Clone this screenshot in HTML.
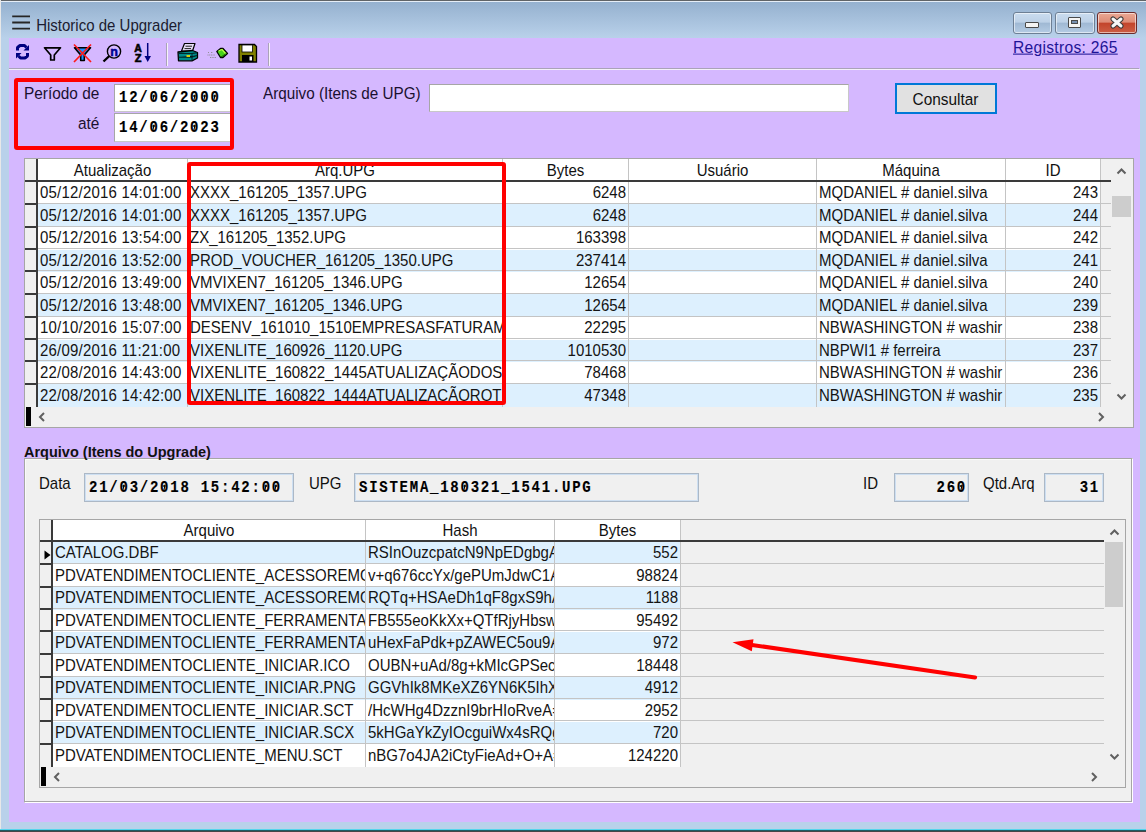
<!DOCTYPE html>
<html><head><meta charset="utf-8"><style>
html,body{margin:0;padding:0;width:1146px;height:832px;overflow:hidden;background:#b9d1ea}
body{position:relative;font-family:"Liberation Sans",sans-serif}
body div, body svg{position:absolute}
.t{white-space:nowrap;line-height:17px;font-size:15px;transform-origin:0 0}
.c{overflow:hidden}
.z{position:relative}.z::after{content:'';position:absolute;left:3.7px;top:5.5px;width:1.3px;height:5px;background:#000;transform:rotate(16deg)}
.m{-webkit-text-stroke:0.12px #000;white-space:nowrap;line-height:17px;font-family:"Liberation Mono",monospace;font-weight:bold;font-size:14px;letter-spacing:1.75px;color:#000;transform-origin:0 0}
</style></head><body>
<div style="left:0px;top:0px;width:1146px;height:832px;background:#b9d1ea"></div>
<div style="left:0px;top:0px;width:1146px;height:38px;background:linear-gradient(#95b1cf 5%,#b9d1ea 100%)"></div>
<div style="left:0px;top:0px;width:1146px;height:1px;background:#606467"></div>
<div style="left:0px;top:1px;width:1146px;height:1px;background:#e6eef7"></div>
<div style="left:0px;top:0px;width:1px;height:832px;background:#e8e8e8"></div>
<div style="left:0px;top:829px;width:1146px;height:1px;background:#55d4ec"></div>
<div style="left:0px;top:830px;width:1146px;height:1px;background:#1d5d66"></div>
<div style="left:0px;top:831px;width:1146px;height:1px;background:#474747"></div>
<div style="left:9px;top:38px;width:1131px;height:784px;background:#d5b8ff"></div>
<svg style="left:10px;top:12px" width="22" height="20" viewBox="10 12 22 20"><path d="M12.2 16.3 L30 16.3 M12.2 22.5 L30 22.5 M12.2 28.7 L30 28.7" stroke="#262626" stroke-width="1.8"/></svg>
<div class="t" style="left:36.2px;top:15.78px;font-size:15px;color:#1c1c30;transform:scaleY(1.06);">Historico de Upgrader</div>
<div style="left:1013px;top:12px;width:37px;height:20px;border:1px solid #6d7f94;border-radius:3px;background:linear-gradient(#cadcef 0%,#bdd1e7 45%,#a0b9d4 52%,#b5cce4 100%);box-shadow:inset 0 0 0 1px rgba(255,255,255,.55)"></div>
<div style="left:1055px;top:12px;width:38px;height:20px;border:1px solid #6d7f94;border-radius:3px;background:linear-gradient(#cadcef 0%,#bdd1e7 45%,#a0b9d4 52%,#b5cce4 100%);box-shadow:inset 0 0 0 1px rgba(255,255,255,.55)"></div>
<div style="left:1097px;top:12px;width:38px;height:20px;border:1px solid #6b2a2a;border-radius:3px;background:linear-gradient(#eaa894 0%,#de8c77 45%,#c3452c 52%,#cc5e45 100%);box-shadow:inset 0 0 0 1px rgba(255,255,255,.55)"></div>
<div style="left:1025px;top:22px;width:12px;height:4px;background:#f4f4f4;border:1px solid #4a4a4a;border-radius:1px"></div>
<div style="left:1068px;top:17px;width:11px;height:9px;border:1px solid #4a4a4a;border-radius:1px;background:#f4f4f4"></div>
<div style="left:1071px;top:20px;width:5px;height:2px;background:#7690b0;border:1px solid #4a4a4a"></div>
<svg style="left:1109px;top:16px" width="16" height="13" viewBox="0 0 16 13"><path d="M4 3 L12 10 M12 3 L4 10" stroke="#3a3a3a" stroke-width="5" stroke-linecap="round"/><path d="M4 3 L12 10 M12 3 L4 10" stroke="#f6f6f6" stroke-width="3" stroke-linecap="round"/></svg>
<div style="left:9px;top:68px;width:1130px;height:1px;background:#aaa3b8"></div>
<div style="left:9px;top:69px;width:1131px;height:1px;background:#f4f0fa"></div>
<div style="left:166px;top:43px;width:1px;height:23px;background:#aaa3b8"></div>
<div style="left:167px;top:43px;width:1px;height:23px;background:#f6f2fb"></div>
<div style="left:268px;top:43px;width:1px;height:23px;background:#aaa3b8"></div>
<div style="left:269px;top:43px;width:1px;height:23px;background:#f6f2fb"></div>

<svg style="left:0px;top:0px" width="300" height="68" viewBox="0 0 300 68">
 <g fill="#000080">
  <polyline points="17.5,50.5 17.5,47.5 20,45.5 24.5,45.5 26.5,47.5" fill="none" stroke="#000080" stroke-width="3" stroke-linejoin="bevel"/>
  <polygon points="23.5,50.5 29,50.5 29,45"/>
  <polyline points="27.5,53 27.5,56 25,58 20.5,58 18.5,56" fill="none" stroke="#000080" stroke-width="3" stroke-linejoin="bevel"/>
  <polygon points="21.5,53 16,53 16,58.5"/>
 </g>
 <path d="M44.5 47.8 L60.5 47.8 L54.3 55 L54.3 60 L50.7 60 L50.7 55 Z" fill="none" stroke="#000" stroke-width="1.7" stroke-linejoin="round"/>
 <path d="M74.5 47.8 L90.5 47.8 L84.3 55 L84.3 60.5 L80.7 60.5 L80.7 55 Z" fill="#1e90ff" stroke="#000" stroke-width="1.6" stroke-linejoin="round"/>
 <path d="M74 44.5 L91 62 M91 44.5 L74 62" stroke="#ff1a1a" stroke-width="1.7"/>
 <circle cx="114" cy="51.5" r="6.6" fill="none" stroke="#000" stroke-width="1.4"/>
 <path d="M109.3 56 L103.5 61.5" stroke="#000" stroke-width="2.4"/>
 <text x="114" y="55.6" text-anchor="middle" font-family="Liberation Sans" font-weight="bold" font-size="12.5" fill="#000090" stroke="#000090" stroke-width="0.5">n</text>
 <text x="138" y="51.5" text-anchor="middle" font-family="Liberation Sans" font-weight="bold" font-size="10.5" fill="#000" stroke="#000" stroke-width="0.6">A</text>
 <text x="138" y="61.8" text-anchor="middle" font-family="Liberation Sans" font-weight="bold" font-size="11" fill="#000" stroke="#000" stroke-width="0.6">Z</text>
 <path d="M147.7 43 L147.7 57" stroke="#000080" stroke-width="1.5"/>
 <path d="M144.5 56 L151 56 L147.7 62 Z" fill="#000080"/>
 <!-- printer -->
 <path d="M184.5 43.5 L195 43.5 L192.5 51 L181.5 51 Z" fill="#e6dcf5" stroke="#000" stroke-width="1.2" stroke-linejoin="round"/>
 <path d="M185.5 46.2 L192 46.2 M184.5 48.6 L191 48.6" stroke="#222" stroke-width="1"/>
 <path d="M178 52 L192.5 50.5 L197.5 52.5 L197.5 58 L192 60.8 L178.5 60.8 Z" fill="#008a8a" stroke="#000" stroke-width="1.3" stroke-linejoin="round"/>
 <path d="M178.5 53.5 L192 53.5 L197 52.8 M178.5 57.2 L192 57.2 L197 55.5 M192 53.5 L192 60.5" stroke="#002a2a" stroke-width="1"/>
 <path d="M186.5 56 L190 56" stroke="#f2e000" stroke-width="1.8"/>
 <!-- eraser -->
 <path d="M208 52.5 L209.5 52.5 M211 52.5 L213 52.5 M207.5 55 L215 55 M210 57.5 L216 57.5" stroke="#8a8a8a" stroke-width="0.9" stroke-dasharray="1 0.7"/>
 <path d="M216.8 51.5 L220.5 48.5 L223 48.5 L227.5 53.5 L223 57.5 L220.5 57.5 Z" fill="#46d21a" stroke="#000" stroke-width="1.3" stroke-linejoin="round"/>
 <path d="M218.5 51 L222 49.5 L226 54" fill="none" stroke="#b8ff40" stroke-width="1.2"/>
 <path d="M221 57 L227 53" stroke="#1a6a00" stroke-width="1"/>
 <!-- floppy -->
 <path d="M239 44.5 L254.5 44.5 L256.5 46.5 L256.5 62 L239 62 Z" fill="#808000" stroke="#000" stroke-width="1.3"/>
 <rect x="242" y="45" width="10.5" height="7" fill="#fff" stroke="#000" stroke-width="0.8"/>
 <rect x="242" y="55" width="11.5" height="7" fill="#000"/>
 <rect x="249.5" y="56.5" width="2.5" height="4" fill="#fff"/>
</svg>

<div class="t" style="left:1013px;top:38.11px;font-size:15.6px;color:#1e1496;transform:scaleY(1.04);text-decoration:underline;letter-spacing:0.3px;">Registros: 265</div>
<div class="t" style="left:24px;top:83.81px;font-size:15.4px;color:#1a1030;transform:scaleY(1.08);">Período de</div>
<div class="t" style="left:78px;top:113.81px;font-size:15.4px;color:#1a1030;transform:scaleY(1.08);">até</div>
<div style="left:114px;top:84px;width:118px;height:28px;background:#fff;border-top:1px solid #a6a6a6;border-left:1px solid #a6a6a6;border-right:1px solid #c8c8c8;border-bottom:1px solid #c8c8c8;box-sizing:border-box"></div>
<div style="left:114px;top:113px;width:118px;height:29px;background:#fff;border-top:1px solid #a6a6a6;border-left:1px solid #a6a6a6;border-right:1px solid #c8c8c8;border-bottom:1px solid #c8c8c8;box-sizing:border-box"></div>
<div class="m" style="left:119px;top:87.17px;transform:scaleY(1.24);">12/<span class="z">0</span>6/2<span class="z">0</span><span class="z">0</span><span class="z">0</span></div>
<div class="m" style="left:119px;top:117.07px;transform:scaleY(1.24);">14/<span class="z">0</span>6/2<span class="z">0</span>23</div>
<div style="left:14px;top:78px;width:212px;height:64px;border:4px solid #ff0000;border-radius:3px"></div>
<div class="t" style="left:263px;top:83.85px;font-size:15.25px;color:#1a1030;transform:scaleY(1.08);">Arquivo (Itens de UPG)</div>
<div style="left:429px;top:84px;width:420px;height:28px;background:#fff;border-top:1px solid #a6a6a6;border-left:1px solid #a6a6a6;border-right:1px solid #c8c8c8;border-bottom:1px solid #c8c8c8;box-sizing:border-box"></div>
<div style="left:895px;top:83px;width:98px;height:27px;border:2px solid #0078d7;background:#e1e1e1"></div>
<div class="t" style="left:894.5px;top:90.21px;font-size:15.4px;color:#111;transform:scaleY(1.08);width:102px;text-align:center;">Consultar</div>
<div style="left:24px;top:158px;width:1110px;height:270px;background:#f0f0f0;border:1px solid #a6a6a6;box-sizing:border-box"></div>
<div style="left:38px;top:159px;width:1062px;height:21px;background:#fff"></div>
<div style="left:38px;top:182px;width:1062px;height:22px;background:#fff"></div>
<div style="left:38px;top:204px;width:1062px;height:23px;background:#ddf0fe"></div>
<div style="left:38px;top:227px;width:1062px;height:23px;background:#fff"></div>
<div style="left:38px;top:250px;width:1062px;height:22px;background:#ddf0fe"></div>
<div style="left:38px;top:272px;width:1062px;height:22px;background:#fff"></div>
<div style="left:38px;top:294px;width:1062px;height:23px;background:#ddf0fe"></div>
<div style="left:38px;top:317px;width:1062px;height:23px;background:#fff"></div>
<div style="left:38px;top:340px;width:1062px;height:22px;background:#ddf0fe"></div>
<div style="left:38px;top:362px;width:1062px;height:22px;background:#fff"></div>
<div style="left:38px;top:384px;width:1062px;height:23px;background:#ddf0fe"></div>
<div style="left:38px;top:203px;width:1073px;height:1px;background:#c4c4c4"></div>
<div style="left:25px;top:203px;width:12px;height:2px;background:#3a3a3a"></div>
<div style="left:38px;top:226px;width:1073px;height:1px;background:#c4c4c4"></div>
<div style="left:25px;top:226px;width:12px;height:2px;background:#3a3a3a"></div>
<div style="left:38px;top:248px;width:1073px;height:1px;background:#c4c4c4"></div>
<div style="left:25px;top:248px;width:12px;height:2px;background:#3a3a3a"></div>
<div style="left:38px;top:270px;width:1073px;height:1px;background:#c4c4c4"></div>
<div style="left:25px;top:270px;width:12px;height:2px;background:#3a3a3a"></div>
<div style="left:38px;top:293px;width:1073px;height:1px;background:#c4c4c4"></div>
<div style="left:25px;top:293px;width:12px;height:2px;background:#3a3a3a"></div>
<div style="left:38px;top:316px;width:1073px;height:1px;background:#c4c4c4"></div>
<div style="left:25px;top:316px;width:12px;height:2px;background:#3a3a3a"></div>
<div style="left:38px;top:338px;width:1073px;height:1px;background:#c4c4c4"></div>
<div style="left:25px;top:338px;width:12px;height:2px;background:#3a3a3a"></div>
<div style="left:38px;top:360px;width:1073px;height:1px;background:#c4c4c4"></div>
<div style="left:25px;top:360px;width:12px;height:2px;background:#3a3a3a"></div>
<div style="left:38px;top:383px;width:1073px;height:1px;background:#c4c4c4"></div>
<div style="left:25px;top:383px;width:12px;height:2px;background:#3a3a3a"></div>
<div style="left:187px;top:159px;width:1px;height:248px;background:#c4c4c4"></div>
<div style="left:502px;top:159px;width:1px;height:248px;background:#c4c4c4"></div>
<div style="left:628px;top:159px;width:1px;height:248px;background:#c4c4c4"></div>
<div style="left:816px;top:159px;width:1px;height:248px;background:#c4c4c4"></div>
<div style="left:1005px;top:159px;width:1px;height:248px;background:#c4c4c4"></div>
<div style="left:1100px;top:159px;width:1px;height:248px;background:#c4c4c4"></div>
<div style="left:36px;top:159px;width:2px;height:248px;background:#3a3a3a"></div>
<div style="left:25px;top:180px;width:1086px;height:2px;background:#3a3a3a"></div>
<div class="t" style="left:38px;top:160.71px;font-size:15px;color:#111;transform:scaleY(1.08);width:149px;text-align:center;">Atualização</div>
<div class="t" style="left:188px;top:160.71px;font-size:15px;color:#111;transform:scaleY(1.08);width:314px;text-align:center;">Arq.UPG</div>
<div class="t" style="left:503px;top:160.71px;font-size:15px;color:#111;transform:scaleY(1.08);width:125px;text-align:center;">Bytes</div>
<div class="t" style="left:629px;top:160.71px;font-size:15px;color:#111;transform:scaleY(1.08);width:187px;text-align:center;">Usuário</div>
<div class="t" style="left:817px;top:160.71px;font-size:15px;color:#111;transform:scaleY(1.08);width:188px;text-align:center;">Máquina</div>
<div class="t" style="left:1006px;top:160.71px;font-size:15px;color:#111;transform:scaleY(1.08);width:94px;text-align:center;">ID</div>
<div class="t c" style="left:40px;top:183.41px;font-size:15px;color:#141414;transform:scaleY(1.08);width:147px;letter-spacing:0.2px;">05/12/2016 14:01:00</div>
<div class="t c" style="left:190px;top:183.41px;font-size:15px;color:#141414;transform:scaleY(1.08);width:312px;">XXXX_161205_1357.UPG</div>
<div class="t c" style="left:503px;top:183.41px;font-size:15px;color:#141414;transform:scaleY(1.08);width:123px;text-align:right;">6248</div>
<div class="t c" style="left:819px;top:183.41px;font-size:15px;color:#141414;transform:scaleY(1.08);width:186px;">MQDANIEL # daniel.silva</div>
<div class="t c" style="left:1006px;top:183.41px;font-size:15px;color:#141414;transform:scaleY(1.08);width:92px;text-align:right;">243</div>
<div class="t c" style="left:40px;top:205.91px;font-size:15px;color:#141414;transform:scaleY(1.08);width:147px;letter-spacing:0.2px;">05/12/2016 14:01:00</div>
<div class="t c" style="left:190px;top:205.91px;font-size:15px;color:#141414;transform:scaleY(1.08);width:312px;">XXXX_161205_1357.UPG</div>
<div class="t c" style="left:503px;top:205.91px;font-size:15px;color:#141414;transform:scaleY(1.08);width:123px;text-align:right;">6248</div>
<div class="t c" style="left:819px;top:205.91px;font-size:15px;color:#141414;transform:scaleY(1.08);width:186px;">MQDANIEL # daniel.silva</div>
<div class="t c" style="left:1006px;top:205.91px;font-size:15px;color:#141414;transform:scaleY(1.08);width:92px;text-align:right;">244</div>
<div class="t c" style="left:40px;top:228.41px;font-size:15px;color:#141414;transform:scaleY(1.08);width:147px;letter-spacing:0.2px;">05/12/2016 13:54:00</div>
<div class="t c" style="left:190px;top:228.41px;font-size:15px;color:#141414;transform:scaleY(1.08);width:312px;">ZX_161205_1352.UPG</div>
<div class="t c" style="left:503px;top:228.41px;font-size:15px;color:#141414;transform:scaleY(1.08);width:123px;text-align:right;">163398</div>
<div class="t c" style="left:819px;top:228.41px;font-size:15px;color:#141414;transform:scaleY(1.08);width:186px;">MQDANIEL # daniel.silva</div>
<div class="t c" style="left:1006px;top:228.41px;font-size:15px;color:#141414;transform:scaleY(1.08);width:92px;text-align:right;">242</div>
<div class="t c" style="left:40px;top:250.91px;font-size:15px;color:#141414;transform:scaleY(1.08);width:147px;letter-spacing:0.2px;">05/12/2016 13:52:00</div>
<div class="t c" style="left:190px;top:250.91px;font-size:15px;color:#141414;transform:scaleY(1.08);width:312px;">PROD_VOUCHER_161205_1350.UPG</div>
<div class="t c" style="left:503px;top:250.91px;font-size:15px;color:#141414;transform:scaleY(1.08);width:123px;text-align:right;">237414</div>
<div class="t c" style="left:819px;top:250.91px;font-size:15px;color:#141414;transform:scaleY(1.08);width:186px;">MQDANIEL # daniel.silva</div>
<div class="t c" style="left:1006px;top:250.91px;font-size:15px;color:#141414;transform:scaleY(1.08);width:92px;text-align:right;">241</div>
<div class="t c" style="left:40px;top:273.41px;font-size:15px;color:#141414;transform:scaleY(1.08);width:147px;letter-spacing:0.2px;">05/12/2016 13:49:00</div>
<div class="t c" style="left:190px;top:273.41px;font-size:15px;color:#141414;transform:scaleY(1.08);width:312px;">VMVIXEN7_161205_1346.UPG</div>
<div class="t c" style="left:503px;top:273.41px;font-size:15px;color:#141414;transform:scaleY(1.08);width:123px;text-align:right;">12654</div>
<div class="t c" style="left:819px;top:273.41px;font-size:15px;color:#141414;transform:scaleY(1.08);width:186px;">MQDANIEL # daniel.silva</div>
<div class="t c" style="left:1006px;top:273.41px;font-size:15px;color:#141414;transform:scaleY(1.08);width:92px;text-align:right;">240</div>
<div class="t c" style="left:40px;top:295.91px;font-size:15px;color:#141414;transform:scaleY(1.08);width:147px;letter-spacing:0.2px;">05/12/2016 13:48:00</div>
<div class="t c" style="left:190px;top:295.91px;font-size:15px;color:#141414;transform:scaleY(1.08);width:312px;">VMVIXEN7_161205_1346.UPG</div>
<div class="t c" style="left:503px;top:295.91px;font-size:15px;color:#141414;transform:scaleY(1.08);width:123px;text-align:right;">12654</div>
<div class="t c" style="left:819px;top:295.91px;font-size:15px;color:#141414;transform:scaleY(1.08);width:186px;">MQDANIEL # daniel.silva</div>
<div class="t c" style="left:1006px;top:295.91px;font-size:15px;color:#141414;transform:scaleY(1.08);width:92px;text-align:right;">239</div>
<div class="t c" style="left:40px;top:318.41px;font-size:15px;color:#141414;transform:scaleY(1.08);width:147px;letter-spacing:0.2px;">10/10/2016 15:07:00</div>
<div class="t c" style="left:190px;top:318.41px;font-size:15px;color:#141414;transform:scaleY(1.08);width:312px;">DESENV_161010_1510EMPRESASFATURAM</div>
<div class="t c" style="left:503px;top:318.41px;font-size:15px;color:#141414;transform:scaleY(1.08);width:123px;text-align:right;">22295</div>
<div class="t c" style="left:819px;top:318.41px;font-size:15px;color:#141414;transform:scaleY(1.08);width:186px;">NBWASHINGTON # washir</div>
<div class="t c" style="left:1006px;top:318.41px;font-size:15px;color:#141414;transform:scaleY(1.08);width:92px;text-align:right;">238</div>
<div class="t c" style="left:40px;top:340.91px;font-size:15px;color:#141414;transform:scaleY(1.08);width:147px;letter-spacing:0.2px;">26/09/2016 11:21:00</div>
<div class="t c" style="left:190px;top:340.91px;font-size:15px;color:#141414;transform:scaleY(1.08);width:312px;">VIXENLITE_160926_1120.UPG</div>
<div class="t c" style="left:503px;top:340.91px;font-size:15px;color:#141414;transform:scaleY(1.08);width:123px;text-align:right;">1010530</div>
<div class="t c" style="left:819px;top:340.91px;font-size:15px;color:#141414;transform:scaleY(1.08);width:186px;">NBPWI1 # ferreira</div>
<div class="t c" style="left:1006px;top:340.91px;font-size:15px;color:#141414;transform:scaleY(1.08);width:92px;text-align:right;">237</div>
<div class="t c" style="left:40px;top:363.41px;font-size:15px;color:#141414;transform:scaleY(1.08);width:147px;letter-spacing:0.2px;">22/08/2016 14:43:00</div>
<div class="t c" style="left:190px;top:363.41px;font-size:15px;color:#141414;transform:scaleY(1.08);width:312px;">VIXENLITE_160822_1445ATUALIZAÇÃODOS</div>
<div class="t c" style="left:503px;top:363.41px;font-size:15px;color:#141414;transform:scaleY(1.08);width:123px;text-align:right;">78468</div>
<div class="t c" style="left:819px;top:363.41px;font-size:15px;color:#141414;transform:scaleY(1.08);width:186px;">NBWASHINGTON # washir</div>
<div class="t c" style="left:1006px;top:363.41px;font-size:15px;color:#141414;transform:scaleY(1.08);width:92px;text-align:right;">236</div>
<div class="t c" style="left:40px;top:385.91px;font-size:15px;color:#141414;transform:scaleY(1.08);width:147px;letter-spacing:0.2px;">22/08/2016 14:42:00</div>
<div class="t c" style="left:190px;top:385.91px;font-size:15px;color:#141414;transform:scaleY(1.08);width:312px;">VIXENLITE_160822_1444ATUALIZAÇÃOROT</div>
<div class="t c" style="left:503px;top:385.91px;font-size:15px;color:#141414;transform:scaleY(1.08);width:123px;text-align:right;">47348</div>
<div class="t c" style="left:819px;top:385.91px;font-size:15px;color:#141414;transform:scaleY(1.08);width:186px;">NBWASHINGTON # washir</div>
<div class="t c" style="left:1006px;top:385.91px;font-size:15px;color:#141414;transform:scaleY(1.08);width:92px;text-align:right;">235</div>
<div style="left:1111px;top:159px;width:22px;height:248px;background:#f0f0f0"></div>
<svg style="left:1116px;top:167px" width="11" height="8" viewBox="0 0 11 8"><path d="M1.5 6.5 L5.5 2.5 L9.5 6.5" fill="none" stroke="#606060" stroke-width="2"/></svg>
<svg style="left:1116px;top:393px" width="11" height="8" viewBox="0 0 11 8"><path d="M1.5 1.5 L5.5 5.5 L9.5 1.5" fill="none" stroke="#606060" stroke-width="2"/></svg>
<div style="left:1112px;top:196px;width:19px;height:21px;background:#cdcdcd"></div>
<div style="left:26px;top:407px;width:5px;height:19px;background:#000"></div>
<svg style="left:38px;top:412px" width="8" height="10" viewBox="0 0 8 10"><path d="M6 1 L2 5 L6 9" fill="none" stroke="#606060" stroke-width="2"/></svg>
<svg style="left:1097px;top:412px" width="8" height="10" viewBox="0 0 8 10"><path d="M2 1 L6 5 L2 9" fill="none" stroke="#606060" stroke-width="2"/></svg>
<div style="left:187px;top:162px;width:311px;height:235px;border:4px solid #ff0000;border-radius:3px"></div>
<div style="left:24px;top:458px;width:1109px;height:345px;background:#f0f0f0;border-top:1px solid #a6a6a6;border-left:1px solid #a6a6a6;border-right:1px solid #fff;border-bottom:1px solid #fff;box-sizing:border-box;box-shadow:inset -1px -1px 0 #a6a6a6, inset 1px 1px 0 #fafafa"></div>
<div class="t" style="left:24px;top:443.38px;font-size:14.5px;color:#111;transform:scaleY(1.04);font-weight:bold;">Arquivo (Itens do Upgrade)</div>
<div class="t" style="left:39px;top:473.51px;font-size:15px;color:#111;transform:scaleY(1.08);">Data</div>
<div style="left:84px;top:473px;width:210px;height:29px;border:1px solid #acb8c6;box-shadow:inset 0 0 0 1px #cddff2;background:#f0f0f0;box-sizing:border-box"></div>
<div class="m" style="left:89px;top:476.87px;transform:scaleY(1.24);">21/<span class="z">0</span>3/2<span class="z">0</span>18 15:42:<span class="z">0</span><span class="z">0</span></div>
<div class="t" style="left:309px;top:473.51px;font-size:15px;color:#111;transform:scaleY(1.08);">UPG</div>
<div style="left:354px;top:473px;width:345px;height:29px;border:1px solid #acb8c6;box-shadow:inset 0 0 0 1px #cddff2;background:#f0f0f0;box-sizing:border-box"></div>
<div class="m" style="left:359px;top:476.87px;transform:scaleY(1.24);">SISTEMA_18<span class="z">0</span>321_1541.UPG</div>
<div class="t" style="left:863px;top:473.51px;font-size:15px;color:#111;transform:scaleY(1.08);">ID</div>
<div style="left:894px;top:473px;width:75px;height:29px;border:1px solid #acb8c6;box-shadow:inset 0 0 0 1px #cddff2;background:#f0f0f0;box-sizing:border-box"></div>
<div class="m" style="left:894px;top:476.87px;transform:scaleY(1.24);width:73px;text-align:right;">26<span class="z">0</span></div>
<div class="t" style="left:983px;top:473.51px;font-size:15px;color:#111;transform:scaleY(1.08);">Qtd.Arq</div>
<div style="left:1044px;top:473px;width:60px;height:29px;border:1px solid #acb8c6;box-shadow:inset 0 0 0 1px #cddff2;background:#f0f0f0;box-sizing:border-box"></div>
<div class="m" style="left:1044px;top:476.87px;transform:scaleY(1.24);width:56px;text-align:right;">31</div>
<div style="left:39px;top:519px;width:1087px;height:269px;background:#f0f0f0;border:1px solid #a6a6a6;box-sizing:border-box"></div>
<div style="left:53px;top:520px;width:627px;height:20px;background:#fff"></div>
<div style="left:53px;top:542px;width:627px;height:22px;background:#ddf0fe"></div>
<div style="left:53px;top:564px;width:627px;height:23px;background:#fff"></div>
<div style="left:53px;top:587px;width:627px;height:23px;background:#ddf0fe"></div>
<div style="left:53px;top:610px;width:627px;height:22px;background:#fff"></div>
<div style="left:53px;top:632px;width:627px;height:22px;background:#ddf0fe"></div>
<div style="left:53px;top:654px;width:627px;height:23px;background:#fff"></div>
<div style="left:53px;top:677px;width:627px;height:23px;background:#ddf0fe"></div>
<div style="left:53px;top:700px;width:627px;height:22px;background:#fff"></div>
<div style="left:53px;top:722px;width:627px;height:22px;background:#ddf0fe"></div>
<div style="left:53px;top:744px;width:627px;height:23px;background:#fff"></div>
<div style="left:53px;top:563px;width:1051px;height:1px;background:#c4c4c4"></div>
<div style="left:40px;top:563px;width:12px;height:2px;background:#3a3a3a"></div>
<div style="left:53px;top:586px;width:1051px;height:1px;background:#c4c4c4"></div>
<div style="left:40px;top:586px;width:12px;height:2px;background:#3a3a3a"></div>
<div style="left:53px;top:608px;width:1051px;height:1px;background:#c4c4c4"></div>
<div style="left:40px;top:608px;width:12px;height:2px;background:#3a3a3a"></div>
<div style="left:53px;top:630px;width:1051px;height:1px;background:#c4c4c4"></div>
<div style="left:40px;top:630px;width:12px;height:2px;background:#3a3a3a"></div>
<div style="left:53px;top:653px;width:1051px;height:1px;background:#c4c4c4"></div>
<div style="left:40px;top:653px;width:12px;height:2px;background:#3a3a3a"></div>
<div style="left:53px;top:676px;width:1051px;height:1px;background:#c4c4c4"></div>
<div style="left:40px;top:676px;width:12px;height:2px;background:#3a3a3a"></div>
<div style="left:53px;top:698px;width:1051px;height:1px;background:#c4c4c4"></div>
<div style="left:40px;top:698px;width:12px;height:2px;background:#3a3a3a"></div>
<div style="left:53px;top:720px;width:1051px;height:1px;background:#c4c4c4"></div>
<div style="left:40px;top:720px;width:12px;height:2px;background:#3a3a3a"></div>
<div style="left:53px;top:743px;width:1051px;height:1px;background:#c4c4c4"></div>
<div style="left:40px;top:743px;width:12px;height:2px;background:#3a3a3a"></div>
<div style="left:365px;top:520px;width:1px;height:247px;background:#c4c4c4"></div>
<div style="left:554px;top:520px;width:1px;height:247px;background:#c4c4c4"></div>
<div style="left:680px;top:520px;width:1px;height:247px;background:#c4c4c4"></div>
<div style="left:51px;top:520px;width:2px;height:247px;background:#3a3a3a"></div>
<div style="left:40px;top:540px;width:1064px;height:2px;background:#3a3a3a"></div>
<div class="t" style="left:53px;top:520.61px;font-size:15px;color:#111;transform:scaleY(1.08);width:312px;text-align:center;">Arquivo</div>
<div class="t" style="left:366px;top:520.61px;font-size:15px;color:#111;transform:scaleY(1.08);width:188px;text-align:center;">Hash</div>
<div class="t" style="left:555px;top:520.61px;font-size:15px;color:#111;transform:scaleY(1.08);width:125px;text-align:center;">Bytes</div>
<div class="t c" style="left:55px;top:543.41px;font-size:15px;color:#141414;transform:scaleY(1.08);width:310px;">CATALOG.DBF</div>
<div class="t c" style="left:368px;top:543.41px;font-size:15px;color:#141414;transform:scaleY(1.08);width:186px;">RSInOuzcpatcN9NpEDgbgA</div>
<div class="t c" style="left:555px;top:543.41px;font-size:15px;color:#141414;transform:scaleY(1.08);width:123px;text-align:right;">552</div>
<div class="t c" style="left:55px;top:565.91px;font-size:15px;color:#141414;transform:scaleY(1.08);width:310px;">PDVATENDIMENTOCLIENTE_ACESSOREMOTO</div>
<div class="t c" style="left:368px;top:565.91px;font-size:15px;color:#141414;transform:scaleY(1.08);width:186px;">v+q676ccYx/gePUmJdwC1A</div>
<div class="t c" style="left:555px;top:565.91px;font-size:15px;color:#141414;transform:scaleY(1.08);width:123px;text-align:right;">98824</div>
<div class="t c" style="left:55px;top:588.41px;font-size:15px;color:#141414;transform:scaleY(1.08);width:310px;">PDVATENDIMENTOCLIENTE_ACESSOREMOTO</div>
<div class="t c" style="left:368px;top:588.41px;font-size:15px;color:#141414;transform:scaleY(1.08);width:186px;">RQTq+HSAeDh1qF8gxS9hA</div>
<div class="t c" style="left:555px;top:588.41px;font-size:15px;color:#141414;transform:scaleY(1.08);width:123px;text-align:right;">1188</div>
<div class="t c" style="left:55px;top:610.91px;font-size:15px;color:#141414;transform:scaleY(1.08);width:310px;">PDVATENDIMENTOCLIENTE_FERRAMENTAS</div>
<div class="t c" style="left:368px;top:610.91px;font-size:15px;color:#141414;transform:scaleY(1.08);width:186px;">FB555eoKkXx+QTfRjyHbswA</div>
<div class="t c" style="left:555px;top:610.91px;font-size:15px;color:#141414;transform:scaleY(1.08);width:123px;text-align:right;">95492</div>
<div class="t c" style="left:55px;top:633.41px;font-size:15px;color:#141414;transform:scaleY(1.08);width:310px;">PDVATENDIMENTOCLIENTE_FERRAMENTAS</div>
<div class="t c" style="left:368px;top:633.41px;font-size:15px;color:#141414;transform:scaleY(1.08);width:186px;">uHexFaPdk+pZAWEC5ou9A</div>
<div class="t c" style="left:555px;top:633.41px;font-size:15px;color:#141414;transform:scaleY(1.08);width:123px;text-align:right;">972</div>
<div class="t c" style="left:55px;top:655.91px;font-size:15px;color:#141414;transform:scaleY(1.08);width:310px;">PDVATENDIMENTOCLIENTE_INICIAR.ICO</div>
<div class="t c" style="left:368px;top:655.91px;font-size:15px;color:#141414;transform:scaleY(1.08);width:186px;">OUBN+uAd/8g+kMIcGPSecA</div>
<div class="t c" style="left:555px;top:655.91px;font-size:15px;color:#141414;transform:scaleY(1.08);width:123px;text-align:right;">18448</div>
<div class="t c" style="left:55px;top:678.41px;font-size:15px;color:#141414;transform:scaleY(1.08);width:310px;">PDVATENDIMENTOCLIENTE_INICIAR.PNG</div>
<div class="t c" style="left:368px;top:678.41px;font-size:15px;color:#141414;transform:scaleY(1.08);width:186px;">GGVhIk8MKeXZ6YN6K5IhXA</div>
<div class="t c" style="left:555px;top:678.41px;font-size:15px;color:#141414;transform:scaleY(1.08);width:123px;text-align:right;">4912</div>
<div class="t c" style="left:55px;top:700.91px;font-size:15px;color:#141414;transform:scaleY(1.08);width:310px;">PDVATENDIMENTOCLIENTE_INICIAR.SCT</div>
<div class="t c" style="left:368px;top:700.91px;font-size:15px;color:#141414;transform:scaleY(1.08);width:186px;">/HcWHg4DzznI9brHIoRveA==</div>
<div class="t c" style="left:555px;top:700.91px;font-size:15px;color:#141414;transform:scaleY(1.08);width:123px;text-align:right;">2952</div>
<div class="t c" style="left:55px;top:723.41px;font-size:15px;color:#141414;transform:scaleY(1.08);width:310px;">PDVATENDIMENTOCLIENTE_INICIAR.SCX</div>
<div class="t c" style="left:368px;top:723.41px;font-size:15px;color:#141414;transform:scaleY(1.08);width:186px;">5kHGaYkZyIOcguiWx4sRQg</div>
<div class="t c" style="left:555px;top:723.41px;font-size:15px;color:#141414;transform:scaleY(1.08);width:123px;text-align:right;">720</div>
<div class="t c" style="left:55px;top:745.91px;font-size:15px;color:#141414;transform:scaleY(1.08);width:310px;">PDVATENDIMENTOCLIENTE_MENU.SCT</div>
<div class="t c" style="left:368px;top:745.91px;font-size:15px;color:#141414;transform:scaleY(1.08);width:186px;">nBG7o4JA2iCtyFieAd+O+A==</div>
<div class="t c" style="left:555px;top:745.91px;font-size:15px;color:#141414;transform:scaleY(1.08);width:123px;text-align:right;">124220</div>
<div style="left:1104px;top:520px;width:21px;height:247px;background:#f0f0f0"></div>
<svg style="left:1109px;top:528px" width="11" height="8" viewBox="0 0 11 8"><path d="M1.5 6.5 L5.5 2.5 L9.5 6.5" fill="none" stroke="#606060" stroke-width="2"/></svg>
<svg style="left:1109px;top:753px" width="11" height="8" viewBox="0 0 11 8"><path d="M1.5 1.5 L5.5 5.5 L9.5 1.5" fill="none" stroke="#606060" stroke-width="2"/></svg>
<div style="left:1105px;top:542px;width:18px;height:65px;background:#cdcdcd"></div>
<div style="left:41px;top:767px;width:5px;height:19px;background:#000"></div>
<svg style="left:53px;top:772px" width="8" height="10" viewBox="0 0 8 10"><path d="M6 1 L2 5 L6 9" fill="none" stroke="#606060" stroke-width="2"/></svg>
<svg style="left:1090px;top:772px" width="8" height="10" viewBox="0 0 8 10"><path d="M2 1 L6 5 L2 9" fill="none" stroke="#606060" stroke-width="2"/></svg>
<svg style="left:44px;top:550px" width="7" height="10" viewBox="0 0 7 10"><path d="M0.5 0.5 L6.5 5 L0.5 9.5 Z" fill="#000"/></svg>
<svg style="left:720px;top:630px" width="270" height="60" viewBox="720 630 270 60"><path d="M975 677.5 L752 645" stroke="#ff0000" stroke-width="4.2" stroke-linecap="round"/><path d="M732.5 642.3 L753.5 639.2 L751.8 651.2 Z" fill="#ff0000"/></svg>
</body></html>
